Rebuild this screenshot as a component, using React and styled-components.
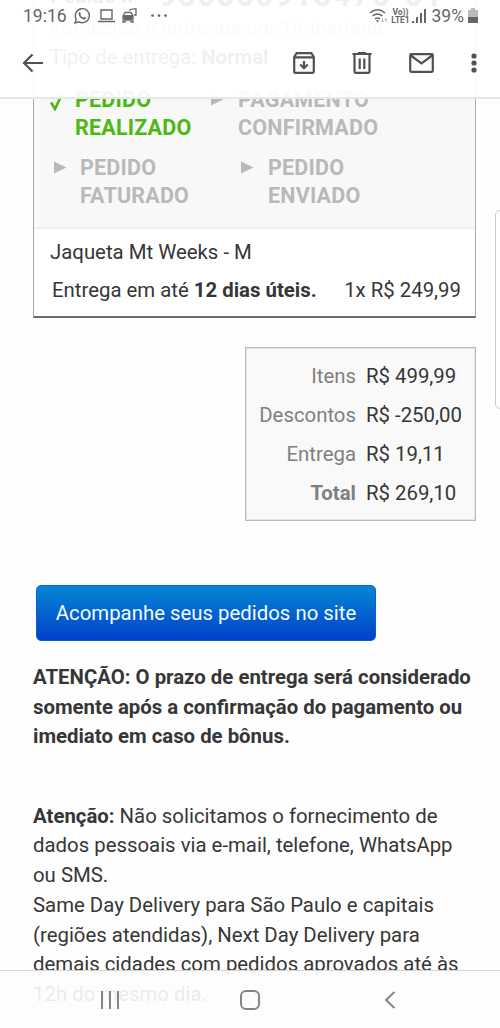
import React from "react";
import styled, { createGlobalStyle } from "styled-components";

const Global = createGlobalStyle`
  *{box-sizing:border-box}
  body{margin:0;background:#fff;font-family:Roboto,"Liberation Sans",sans-serif;color:#363636}
`;
const Screen = styled.main`
  position:relative;width:500px;height:1028px;overflow:hidden;background:#fefefe;
`;
const Mail = styled.article`
  padding:0 24px 0 33px;display:flex;flex-direction:column;
`;
const Line = styled.div`
  font-size:${p => p.$size || 20.38}px;line-height:${p => p.$lh || 30}px;
  font-weight:${p => (p.$bold ? 700 : 400)};letter-spacing:${p => p.$ls || 0}px;
  color:${p => p.$color || "inherit"};white-space:nowrap;
`;
const OrderCard = styled.section`
  height:318px;border:1px solid #aaa;border-top:0;border-bottom:2px solid #6b6b6b;
  display:flex;flex-direction:column;width:443px;background:#fff;
`;
const OrderHead = styled.div`
  height:229px;padding-left:16px;background:#f8f8f8;border-bottom:2px solid #f0f0f0;
`;
const OrderTitle = styled.h1`
  margin:0;height:14px;padding-bottom:6px;display:flex;align-items:flex-end;gap:16px;
  font-size:21px;line-height:24px;font-weight:700;color:#333;white-space:nowrap;
`;
const OrderNumber = styled.span`font-size:31px;letter-spacing:1.6px;`;
const Steps = styled.div`
  display:grid;grid-template-columns:${p => p.$cols};margin-top:${p => p.$top}px;
`;
const Step = styled.div`
  display:flex;color:${p => (p.$done ? "#4cb810" : "#b9b9b9")};
  padding-left:${p => p.$left || 0}px;
`;
const StepName = styled.div`
  font-size:21.5px;line-height:28px;font-weight:700;letter-spacing:.2px;white-space:nowrap;
`;
const Mark = styled.span`width:${p => p.$w}px;padding-top:${p => p.$top || 7}px;line-height:0;flex:none;`;
const Item = styled.div`padding:8px 0 0 16px;`;
const ItemRow = styled.div`
  display:flex;justify-content:space-between;padding:8px 14px 0 2px;
`;
const Summary = styled.section`
  align-self:flex-end;width:231px;height:174px;margin-top:29px;padding:9px 0 0;
  border:1.5px solid #bbb;outline:1px solid #e4e4e4;outline-offset:-2px;background:#f9f9f9;
`;
const SummaryRow = styled.div`
  display:grid;grid-template-columns:110px 1fr;column-gap:10px;height:38.8px;align-items:center;
`;
const Label = styled(Line)`color:#808080;text-align:right;`;
const Track = styled.button`
  margin:64px 0 0 3px;width:340px;height:56px;border:1px solid #0a62c4;border-radius:5px;padding:0 0 1px;
  color:#f2faff;background:linear-gradient(#0587d2,#0340cc);font:400 20.38px/30px Roboto,sans-serif;
`;
const Para = styled.div`margin-top:${p => p.$top}px;`;
const TopOverlay = styled.header`
  position:absolute;inset:0 0 auto 0;height:99px;background:rgba(255,255,255,.92);
  border-bottom:2px solid #e3eaec;
`;
const StatusBar = styled.div`
  height:31px;display:flex;align-items:center;justify-content:space-between;padding:0 22px 0 23px;
  color:#646668;font-size:17.5px;
`;
const Cluster = styled.div`display:flex;align-items:center;gap:${p => p.$gap}px;`;
const Volte = styled.div`
  width:19px;font-size:8.5px;line-height:8px;font-weight:700;text-align:center;letter-spacing:-.1px;
`;
const Toolbar = styled.div`
  height:64px;display:flex;align-items:center;justify-content:space-between;padding:0 23px 0 22px;
`;
const Actions = styled.div`display:flex;align-items:center;gap:37px;`;
const BottomOverlay = styled.nav`
  position:absolute;inset:auto 0 0 0;height:58px;background:rgba(253,253,253,.91);
  border-top:1px solid #d5d5d5;display:grid;grid-template-columns:repeat(3,140px);
  justify-content:center;align-items:center;justify-items:center;color:#858585;
`;
const SideHandle = styled.div`
  position:absolute;left:495px;top:210px;width:20px;height:199px;border:1px solid #ccc;border-radius:5px;background:#fff;
`;
const Ink = styled.div`color:#505152;line-height:0;`;

const Svg = ({ w = 24, h = 24, sw = 2, children }) => (
  <svg width={w} height={h} viewBox={`0 0 ${w} ${h}`} fill="none" stroke="currentColor" strokeWidth={sw}>
    {children}
  </svg>
);
const Arrow = () => (
  <Svg w={13} h={13}><path d="M0 .5L12.5 6.5L0 12.5Z" fill="currentColor" stroke="none" /></Svg>
);

const summary = [
  ["Itens", "R$ 499,99"],
  ["Descontos", "R$ -250,00"],
  ["Entrega", "R$ 19,11"],
  ["Total", "R$ 269,10"],
];

export default function App() {
  return (
    <Screen>
      <Global />
      <Mail>
        <OrderCard>
          <OrderHead>
            <OrderTitle><span>Pedido nº</span><OrderNumber>980860918476-01</OrderNumber></OrderTitle>
            <Line $lh={29} $color="#c4c4c4">Fornecido e entregue por Timberland</Line>
            <Line $lh={29} $color="#444">Tipo de entrega: <b>Normal</b></Line>
            <Steps $cols="161px 1fr" $top={14}>
              <Step $done>
                <Mark $w={25}><Svg w={13} h={18} sw={2.6}><path d="M1 9.5L5 16L12 1" /></Svg></Mark>
                <StepName>PEDIDO<br />REALIZADO</StepName>
              </Step>
              <Step><Mark $w={27}><Arrow /></Mark><StepName>PAGAMENTO<br />CONFIRMADO</StepName></Step>
            </Steps>
            <Steps $cols="188px 1fr" $top={12}>
              <Step $left={4}><Mark $w={26}><Arrow /></Mark><StepName>PEDIDO<br />FATURADO</StepName></Step>
              <Step $left={3}><Mark $w={27}><Arrow /></Mark><StepName>PEDIDO<br />ENVIADO</StepName></Step>
            </Steps>
          </OrderHead>
          <Item>
            <Line>Jaqueta Mt Weeks - M</Line>
            <ItemRow><Line>Entrega em até <b>12 dias úteis.</b></Line><Line>1x R$ 249,99</Line></ItemRow>
          </Item>
        </OrderCard>
        <Summary>
          {summary.map(([k, v]) => (
            <SummaryRow key={k}><Label $bold={k === "Total"}>{k}</Label><Line>{v}</Line></SummaryRow>
          ))}
        </Summary>
        <Track>Acompanhe seus pedidos no site</Track>
        <Para $top={22}>
          <Line $bold $lh={29.7}>ATENÇÃO: O prazo de entrega será considerado</Line>
          <Line $bold $lh={29.7}>somente após a confirmação do pagamento ou</Line>
          <Line $bold $lh={29.7}>imediato em caso de bônus.</Line>
        </Para>
        <Para $top={49.6}>
          <Line $lh={29.7}><b>Atenção:</b> Não solicitamos o fornecimento de</Line>
          <Line $lh={29.7}>dados pessoais via e-mail, telefone, WhatsApp</Line>
          <Line $lh={29.7}>ou SMS.</Line>
          <Line $lh={29.7}>Same Day Delivery para São Paulo e capitais</Line>
          <Line $lh={29.7}>(regiões atendidas), Next Day Delivery para</Line>
          <Line $lh={29.7}>demais cidades com pedidos aprovados até às</Line>
          <Line $lh={29.7}>12h do mesmo dia.</Line>
        </Para>
      </Mail>
      <SideHandle />
      <TopOverlay>
        <StatusBar>
          <Cluster $gap={7}>
            <span>19:16</span>
            <Svg w={17} h={17} sw={1.4}><path d="M1 16L2.2 12A7 7 0 1 1 5 14.8Z" /><path d="M5.7 4.7L7 7L6.3 8Q7.4 10 9.3 10.8L10.3 9.7L12.3 11Q11 13 8.8 12.2Q5.2 10.7 4.6 7Q4.5 5.6 5.7 4.7Z" fill="currentColor" stroke="none" /></Svg>
            <Svg w={17} h={14} sw={1.4}><path d="M3 1H14V10H3ZM0 12.5H17" /></Svg>
            <Svg w={16} h={15} sw={1.3}><path d="M1 8L3 4.5H9L11 8V14H9V12H3V14H1ZM1 8H11M7 2.5Q10 .5 14 1V7H12" /><path d="M2 8H10V11H2Z" fill="currentColor" /></Svg>
            <Svg w={30} h={4}><g fill="currentColor" stroke="none"><circle cx="7.5" cy="1.6" r="1.3" /><circle cx="14" cy="1.6" r="1.3" /><circle cx="20.5" cy="1.6" r="1.3" /></g></Svg>
          </Cluster>
          <Cluster $gap={2}>
            <Svg w={20} h={16} sw={1.6}><path d="M1 5Q8.5 -1.5 16 5M3.5 8Q8.5 4 13.5 8M6 11Q8.5 9 11 11" /><path d="M7 12.5Q8.5 11.5 10 12.5L8.5 14.5Z" fill="currentColor" stroke="none" /><path d="M13.5 10.5V14M12.3 12.8L13.5 14L14.7 12.8M17 14V10.5M15.8 11.7L17 10.5L18.2 11.7" stroke="#aaa" strokeWidth=".9" /></Svg>
            <Volte>Vo))<br />LTE1</Volte>
            <Svg w={14} h={15}><path d="M1 13V15M5 9V15M9 5V15M13 1V15" /></Svg>
            <Cluster $gap={4}>
              <Cluster $gap={0}>&#8202;&#8202;39%</Cluster>
              <Svg w={10} h={15}><path d="M0 2H3V0H7V2H10V9H0Z" fill="#bbb" stroke="none" /><path d="M0 9H10V15H0Z" fill="currentColor" stroke="none" /></Svg>
            </Cluster>
          </Cluster>
        </StatusBar>
        <Toolbar>
          <Ink><Svg w={22} h={20} sw={2.2}><path d="M10.5 1.5L2 10L10.5 18.5M2 10H21" /></Svg></Ink>
          <Ink><Actions>
            <Svg w={22} h={22} sw={2.2}><path d="M1.2 5L3.6 1.2H18.4L20.8 5V19.6Q20.8 20.8 19.6 20.8H2.4Q1.2 20.8 1.2 19.6ZM1.2 5.4H20.8M11 9V16M7.2 12.5L11 16.2L14.8 12.5" /></Svg>
            <Svg w={20} h={22} sw={2.2}><path d="M.5 2H19.5M6 1H14M2.5 3V19.8Q2.5 20.8 3.5 20.8H16.5Q17.5 20.8 17.5 19.8V3M7.7 6.5V17M12.3 6.5V17" /></Svg>
            <Svg w={25} h={20} sw={2.2}><path d="M2.2 1.2H22.8Q23.8 1.2 23.8 2.2V17.8Q23.8 18.8 22.8 18.8H2.2Q1.2 18.8 1.2 17.8V2.2Q1.2 1.2 2.2 1.2ZM1.8 2.5L12.5 10.5L23.2 2.5" /></Svg>
            <Svg w={6} h={20}><g fill="currentColor" stroke="none"><circle cx="3" cy="3" r="2.6" /><circle cx="3" cy="10" r="2.6" /><circle cx="3" cy="17" r="2.6" /></g></Svg>
          </Actions></Ink>
        </Toolbar>
      </TopOverlay>
      <BottomOverlay>
        <Svg w={18} h={18}><path d="M1 0V18M9 0V18M17 0V18" /></Svg>
        <Svg w={20} h={20}><rect x="1" y="1" width="18" height="18" rx="5" /></Svg>
        <Svg w={12} h={18}><path d="M10.5 1L2 9L10.5 17" /></Svg>
      </BottomOverlay>
    </Screen>
  );
}
